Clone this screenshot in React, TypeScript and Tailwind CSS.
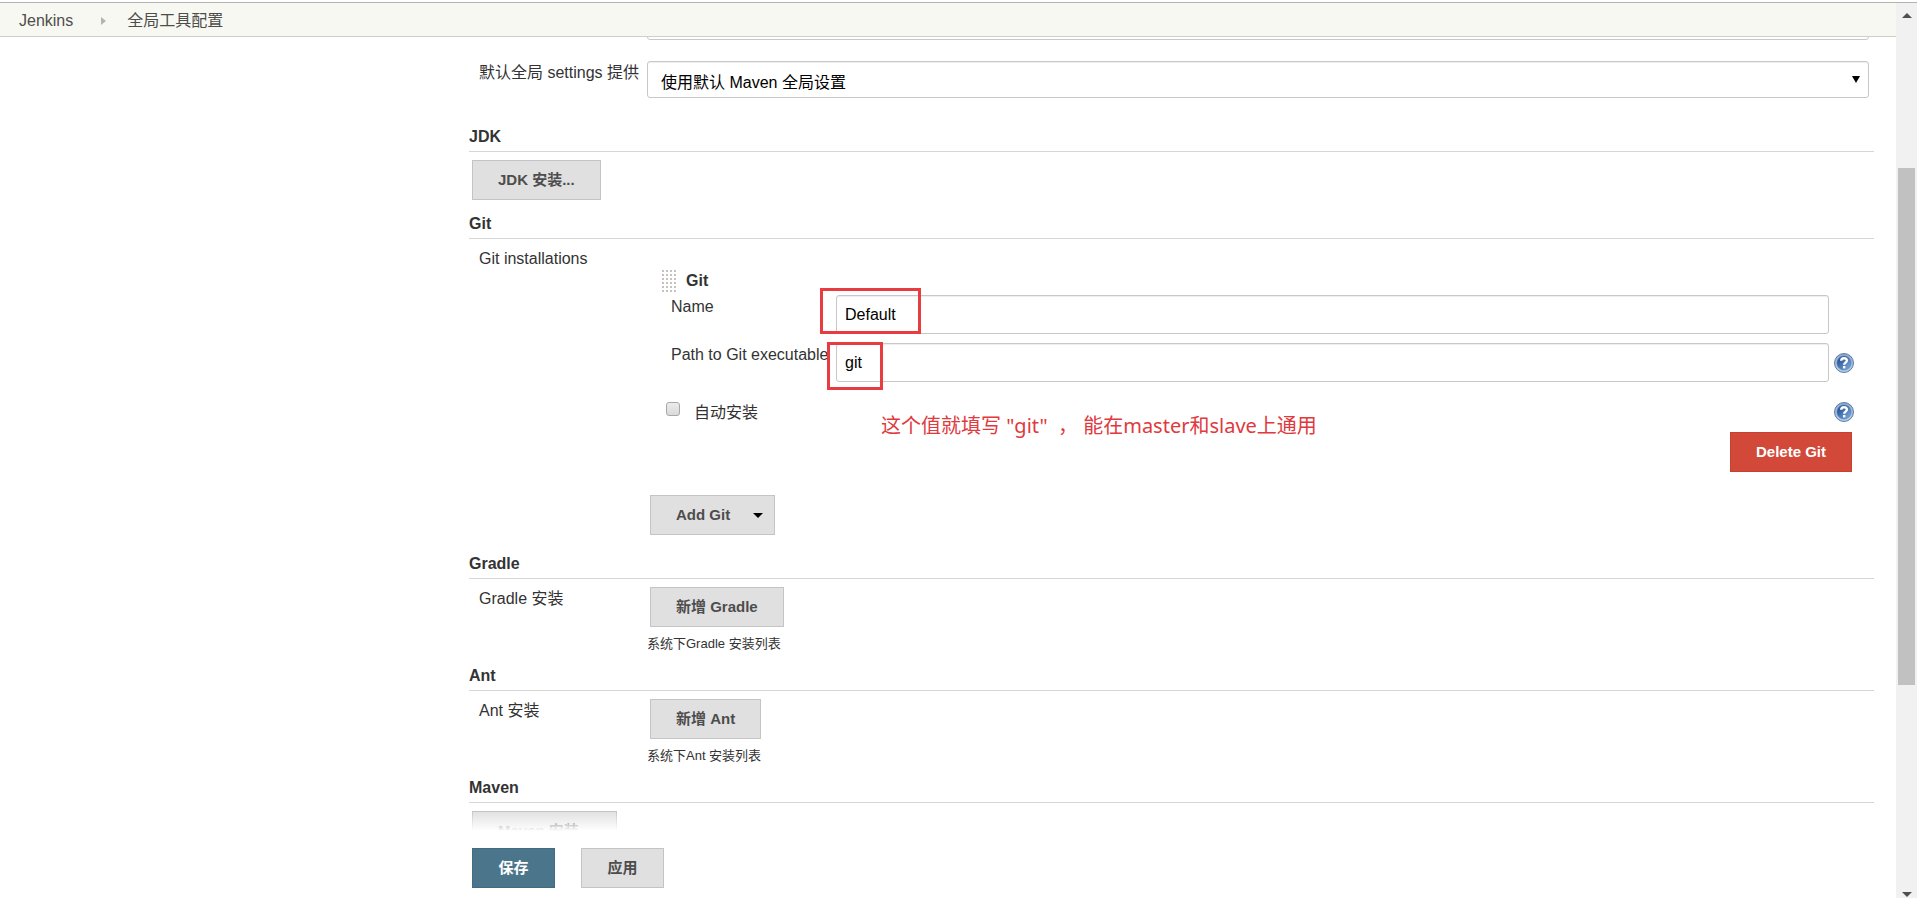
import { useState } from "react";
import type { ReactNode } from "react";

const BUTTON =
  "inline-flex h-10 min-w-[83px] items-center justify-center border px-[25px] text-[15px] leading-5 font-bold whitespace-nowrap";
const GRAY = "border-[#c4c4c4] bg-[#e0e0e0] text-[#4d4d4d]";
const FIELD =
  "w-full rounded-[3px] border border-[#c8c8c8] bg-white text-base text-black shadow-[inset_0_1px_1px_rgba(0,0,0,0.07)] outline-none";

function GrayButton({ children }: { children: ReactNode }) {
  return (
    <button type="button" className={`${BUTTON} ${GRAY}`}>
      {children}
    </button>
  );
}

function HelpButton({ label }: { label: string }) {
  return (
    <button type="button" aria-label={label} className="block size-5 shrink-0">
      <svg viewBox="0 0 20 20" className="size-5">
        <defs>
          <linearGradient id="helpFill" x1="0" y1="0" x2="1" y2="1">
            <stop offset="0.25" stopColor="#2f5a9c" />
            <stop offset="1" stopColor="#86b4e4" />
          </linearGradient>
          <linearGradient id="helpRing" x1="0" y1="0" x2="0" y2="1">
            <stop offset="0" stopColor="#8fa9cb" />
            <stop offset="1" stopColor="#b4d2f0" />
          </linearGradient>
        </defs>
        <circle cx="10" cy="10" r="9.5" fill="url(#helpRing)" stroke="#54719a" strokeWidth="0.9" />
        <circle cx="10" cy="10" r="7" fill="url(#helpFill)" stroke="#4870a8" strokeWidth="0.5" />
        <path
          d="M7.2 7.8 C7.2 4.4 12.9 4.4 12.9 7.6 C12.9 9.7 10.2 9.6 10.2 11.8"
          fill="none"
          stroke="#fff"
          strokeWidth="2.4"
        />
        <rect x="9" y="13" width="2.4" height="2.4" fill="#fff" />
      </svg>
    </button>
  );
}

function DragHandle() {
  const rows = [0, 1, 2, 3, 4, 5];
  const cols = [0, 1, 2, 3];
  return (
    <svg viewBox="0 0 14 22" className="h-[22px] w-[14px] shrink-0">
      {rows.map((r) =>
        cols.map((c) => (
          <rect key={`${r}-${c}`} x={c * 4} y={r * 4} width="2" height="2" fill="#c6c3bf" />
        ))
      )}
    </svg>
  );
}

function Section({ title, children }: { title: string; children: ReactNode }) {
  return (
    <section>
      <h2 className="border-b border-[#d6d6d6] pb-0.5 text-base leading-6 font-bold text-[#333]">
        {title}
      </h2>
      <div className="pt-2">{children}</div>
    </section>
  );
}

function Row({ label, htmlFor, children }: { label: string; htmlFor?: string; children: ReactNode }) {
  return (
    <div className="flex items-start pl-[10px]">
      <label htmlFor={htmlFor} className="w-[168px] shrink-0 text-base leading-6 whitespace-nowrap">
        {label}
      </label>
      <div className="min-w-0 flex-1">{children}</div>
    </div>
  );
}

function GitInstallation() {
  const [name, setName] = useState("Default");
  const [path, setPath] = useState("git");
  const [auto, setAuto] = useState(false);

  return (
    <div className="pt-[22px] pr-5 pl-[15px]">
      <div className="mb-[2px] flex items-center gap-[10px] text-base leading-6 font-bold">
        <DragHandle />
        <span>Git</span>
      </div>

      <div className="flex h-12 items-start pl-[9px]">
        <label htmlFor="git-name" className="w-[165px] shrink-0 leading-6">
          Name
        </label>
        <div className="relative flex-1">
          <input
            id="git-name"
            className={`${FIELD} block h-[39px] px-2`}
            value={name}
            onChange={(e) => setName(e.target.value)}
          />
          <span className="pointer-events-none absolute -top-[7px] -left-4 h-[46px] w-[101px] border-3 border-[#e73c40]" />
        </div>
        <span className="w-[25px] shrink-0" />
      </div>

      <div className="flex h-12 items-start pl-[9px]">
        <label htmlFor="git-path" className="w-[165px] shrink-0 leading-6 whitespace-nowrap">
          Path to Git executable
        </label>
        <div className="relative flex-1">
          <input
            id="git-path"
            className={`${FIELD} block h-[39px] px-2`}
            value={path}
            onChange={(e) => setPath(e.target.value)}
          />
          <span className="pointer-events-none absolute -top-px -left-[9px] h-12 w-14 border-3 border-[#e73c40]" />
        </div>
        <div className="flex h-10 w-[25px] shrink-0 items-center justify-end">
          <HelpButton label="Help for Path to Git executable" />
        </div>
      </div>

      <div className="relative flex h-[41px] items-start justify-between pt-[11px] pl-1">
        <div className="flex items-start gap-[14px]">
          <input
            id="git-auto"
            type="checkbox"
            checked={auto}
            onChange={(e) => setAuto(e.target.checked)}
            className="size-[14px] appearance-none rounded-[3px] border border-[#a8a8a8] bg-linear-to-b from-[#ececec] to-[#dadada] checked:bg-[#4b758b]"
          />
          <label htmlFor="git-auto" className="leading-[22px]">
            自动安装
          </label>
        </div>
        <HelpButton label="Help for 自动安装" />
        <p className="pointer-events-none absolute top-[21px] left-[219px] font-['Noto_Sans','Noto_Sans_CJK_SC',sans-serif] text-xl leading-7 whitespace-pre text-[#e0393e]">
          {'这个值就填写 "git"  ， 能在master和slave上通用'}
        </p>
      </div>

      <div className="flex justify-end pr-[2px]">
        <button type="button" className={`${BUTTON} border-[#c4402f] bg-[#d24939] text-white`}>
          Delete Git
        </button>
      </div>
    </div>
  );
}

function ScrollBar() {
  return (
    <div aria-hidden="true" className="flex w-[21px] shrink-0 flex-col bg-[#f1f1f1] px-[2px]">
      <div className="flex h-[21px] items-center justify-center pt-1">
        <svg viewBox="0 0 10 5" className="h-[5px] w-[10px]">
          <path d="M0 5 L5 0 L10 5 Z" fill="#505050" />
        </svg>
      </div>
      <div className="grow-[144]" />
      <div className="grow-[517] bg-[#c1c1c1]" />
      <div className="grow-[192]" />
      <div className="flex h-[21px] items-end justify-center pb-px">
        <svg viewBox="0 0 10 5" className="h-[5px] w-[10px]">
          <path d="M0 0 L5 5 L10 0 Z" fill="#505050" />
        </svg>
      </div>
    </div>
  );
}

export default function App() {
  return (
    <div className="flex h-screen flex-col bg-white pt-[2px] font-['Liberation_Sans','Noto_Sans_CJK_SC',sans-serif] text-base text-[#333]">
      <div className="flex min-h-0 flex-1 border-t border-[#b2b2ae]">
        <div className="flex min-w-0 flex-1 flex-col">

          {/* Breadcrumbs */}
          <nav className="flex h-[34px] shrink-0 items-center border-b border-[#cfcfcb] bg-[#f8f8f3] px-[19px] pt-0.5 leading-6 text-[#4d4d4b]">
            <a href="#jenkins">Jenkins</a>
            <svg viewBox="0 0 5 8" className="mr-[21px] ml-7 h-2 w-[5px]">
              <path d="M0 0 L5 4 L0 8 Z" fill="#b4b4b0" />
            </svg>
            <a href="#tools">全局工具配置</a>
          </nav>

          <div className="flex min-h-0 flex-1">
            <aside className="w-[469px] shrink-0" />

            <main className="flex min-w-0 flex-1 flex-col pr-[22px]">
              <div className="min-h-0 flex-1 overflow-hidden">

                {/* Settings provider, mostly scrolled under the breadcrumbs */}
                <div className="flex h-[3px] items-end overflow-hidden pr-[5px] pl-[178px]">
                  <select aria-label="默认 settings 提供" className={`${FIELD} h-[37px] shrink-0 appearance-none px-[13px]`}>
                    <option></option>
                  </select>
                </div>

                <div className="pt-[21px] pr-[5px] pb-[27px]">
                  <Row label="默认全局 settings 提供" htmlFor="global-settings">
                    <div className="relative">
                      <select
                        id="global-settings"
                        className={`${FIELD} block h-[37px] appearance-none px-[13px] pt-1.5`}
                      >
                        <option>使用默认 Maven 全局设置</option>
                      </select>
                      <svg
                        viewBox="0 0 8 7"
                        className="pointer-events-none absolute top-[15px] right-[9px] h-[7px] w-2"
                      >
                        <path d="M0 0 H8 L4 7 Z" fill="#000" />
                      </svg>
                    </div>
                  </Row>
                </div>

                <Section title="JDK">
                  <div className="pb-3 pl-[3px]">
                    <GrayButton>JDK 安装...</GrayButton>
                  </div>
                </Section>

                <Section title="Git">
                  <Row label="Git installations">
                    <GitInstallation />
                    <div className="pt-[23px] pb-[17px] pl-[3px]">
                      <button type="button" className={`${BUTTON} ${GRAY} pr-[11px]`}>
                        Add Git
                        <svg viewBox="0 0 10 5" className="ml-[23px] h-[5px] w-[10px]">
                          <path d="M0 0 H10 L5 5 Z" fill="#000" />
                        </svg>
                      </button>
                    </div>
                  </Row>
                </Section>

                <Section title="Gradle">
                  <Row label="Gradle 安装">
                    <div className="pl-[3px]">
                      <GrayButton>新增 Gradle</GrayButton>
                    </div>
                    <p className="pt-[7px] pb-[10px] text-[13px] leading-5">系统下Gradle 安装列表</p>
                  </Row>
                </Section>

                <Section title="Ant">
                  <Row label="Ant 安装">
                    <div className="pl-[3px]">
                      <GrayButton>新增 Ant</GrayButton>
                    </div>
                    <p className="pt-[7px] pb-[10px] text-[13px] leading-5">系统下Ant 安装列表</p>
                  </Row>
                </Section>

                <Section title="Maven">
                  <div className="pl-[3px]">
                    <GrayButton>Maven 安装...</GrayButton>
                  </div>
                </Section>
              </div>

              {/* Sticky actions, content fades out above them */}
              <div className="relative flex shrink-0 gap-[26px] bg-white pt-[17px] pb-[10px] pl-[3px]">
                <div className="pointer-events-none absolute inset-x-0 bottom-full h-5 bg-linear-to-b from-white/0 to-white" />
                <button type="button" className={`${BUTTON} border-[#426c82] bg-[#4b758b] text-white`}>
                  保存
                </button>
                <GrayButton>应用</GrayButton>
              </div>
            </main>
          </div>
        </div>

        <ScrollBar />
      </div>
    </div>
  );
}
